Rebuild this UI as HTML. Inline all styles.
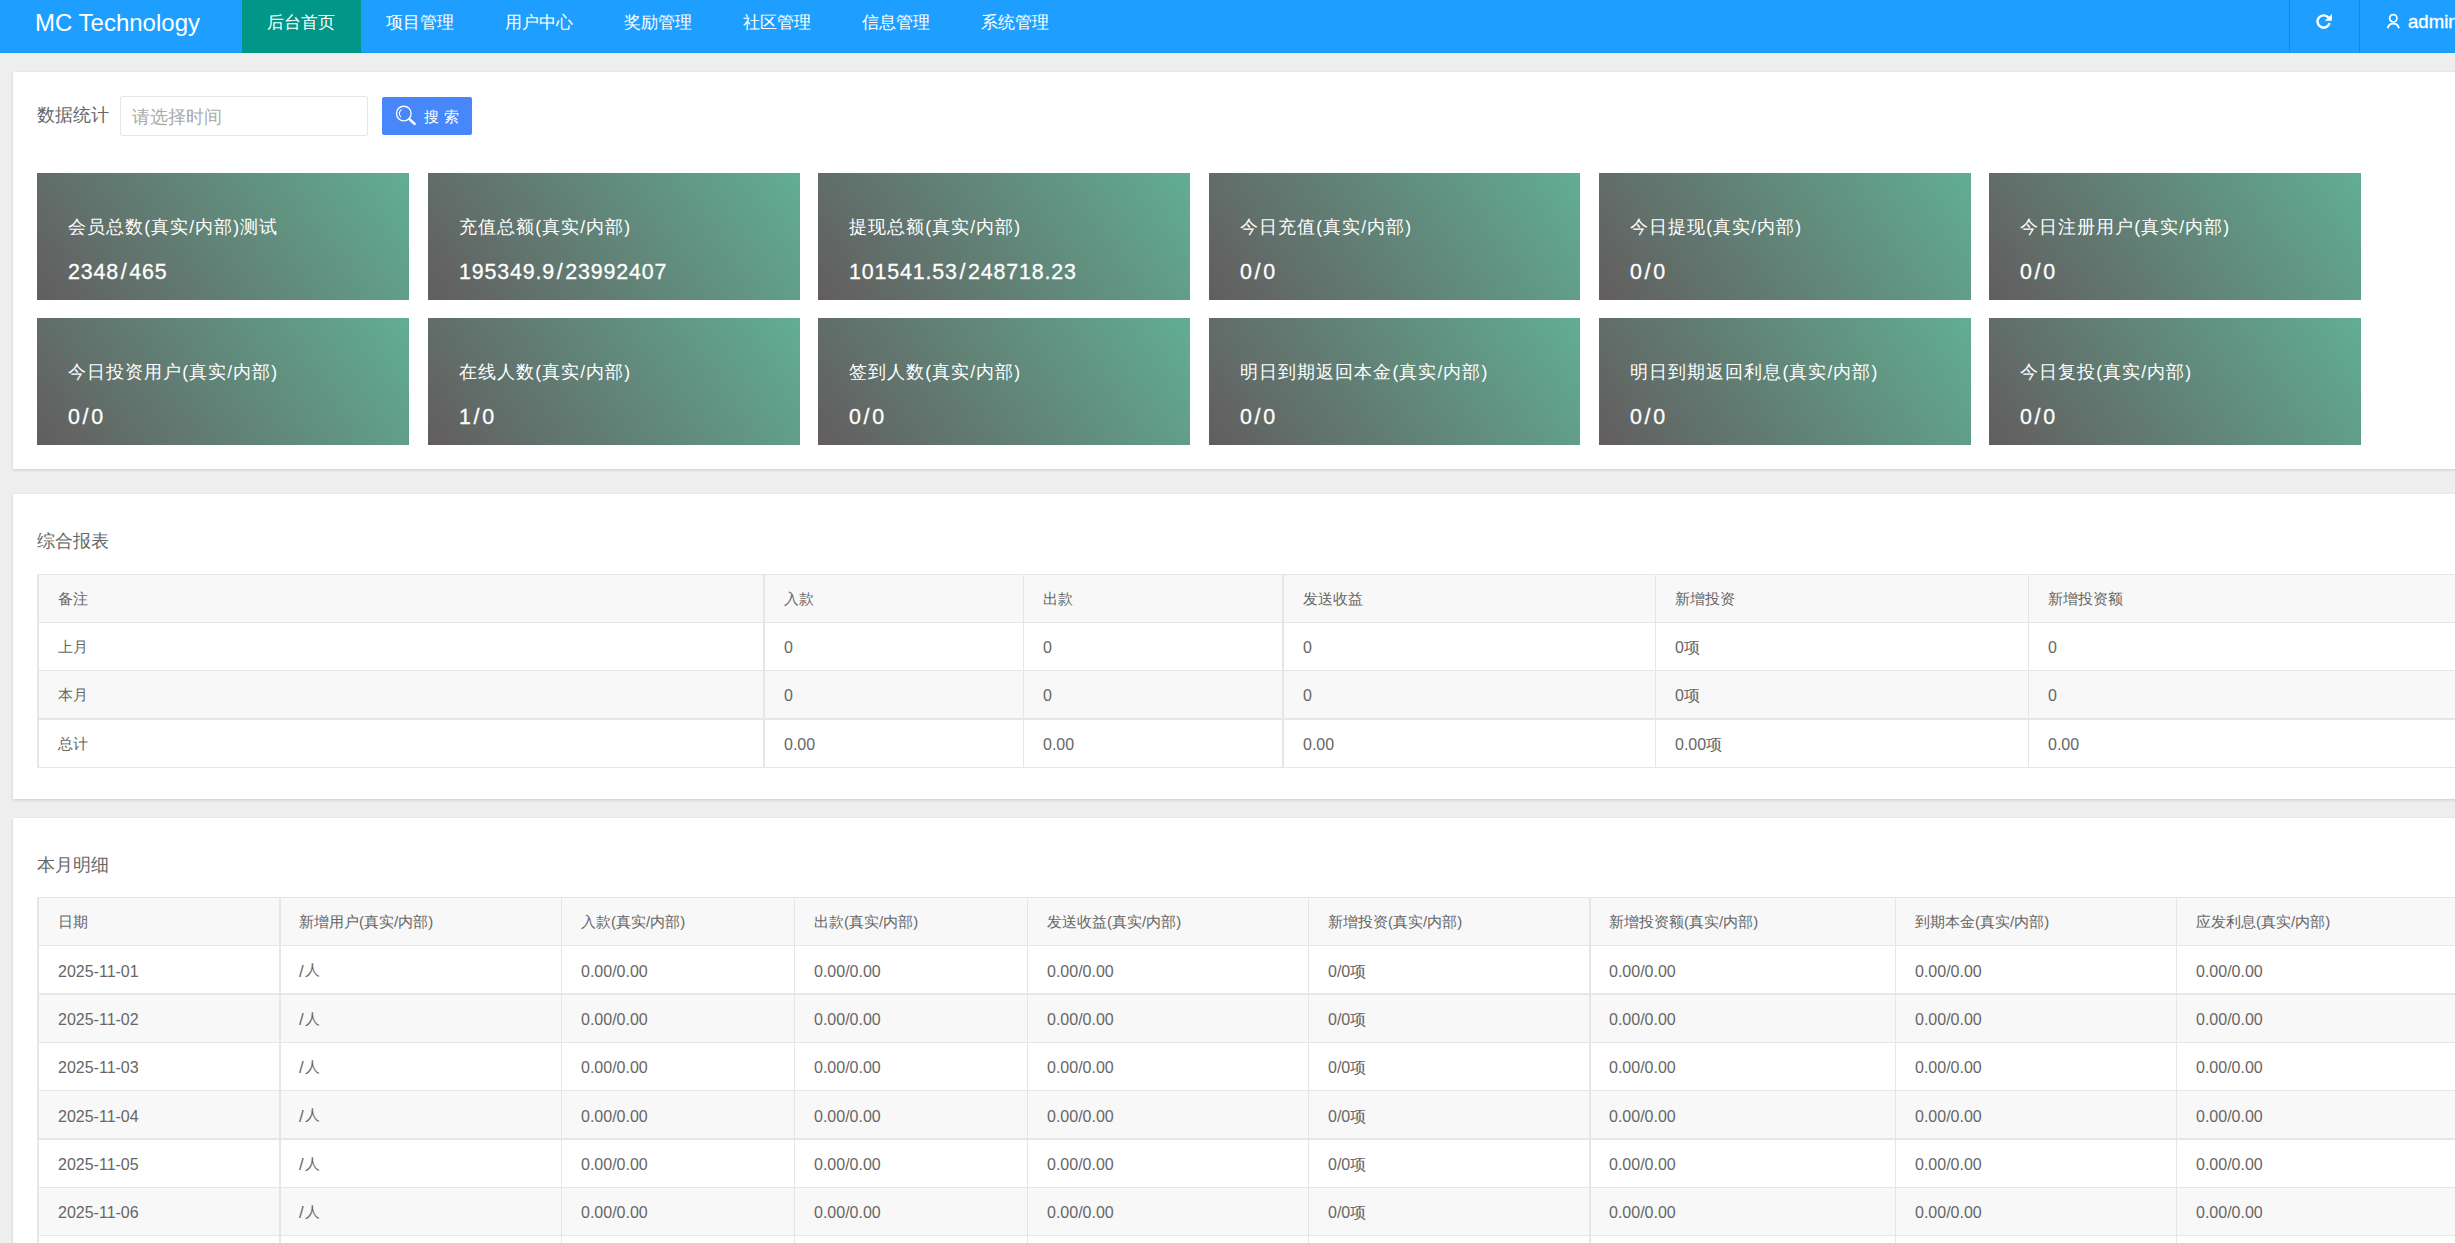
<!DOCTYPE html>
<html><head><meta charset="utf-8">
<style>
*{box-sizing:border-box;margin:0;padding:0}
html,body{width:2455px;height:1243px;overflow:hidden;background:#eeeeee;font-family:"Liberation Sans",sans-serif;color:#666}
.hd{position:absolute;left:0;top:0;width:2455px;height:53px;background:#1E9FFF;border-bottom:1px solid #129aff;color:#fff}
.hdl{position:absolute;left:0;top:53px;width:2455px;height:1px;background:#f6f2ef}
.logo{position:absolute;left:35px;top:0.5px;height:44px;line-height:44px;font-size:24px;white-space:nowrap}
.nav{position:absolute;top:0;height:52px;width:119px;line-height:44px;font-size:17.45px;text-align:center;white-space:nowrap;padding-right:1px}
.nav.on{background:#009688;height:53px;border-bottom:1px solid #00917f;box-sizing:border-box}
.sep{position:absolute;top:0;width:1px;height:52px;background:#1a86d4}
.card{position:absolute;left:13px;width:2600px;background:#fff;box-shadow:0 1px 3px rgba(0,0,0,.14)}
.lbl{position:absolute;font-size:17.5px;line-height:20px;color:#666;white-space:nowrap}
.inp{position:absolute;left:120px;top:96px;width:247.5px;height:40px;border:1px solid #e6e6e6;border-radius:2px;background:#fff}
.inp span{position:absolute;left:11px;top:1px;line-height:38px;font-size:17.5px;color:#aaa;white-space:nowrap}
.btn{position:absolute;width:90.6px;height:38.6px;background:#4787fa;border-radius:2px;color:#fff}
.btn span{position:absolute;left:42.5px;top:0.6px;line-height:39px;font-size:15px;letter-spacing:4.8px;white-space:nowrap}
.box{position:absolute;width:372px;height:127px;background:linear-gradient(55deg,#625d5e,#61ae93);color:#fff}
.box .t{position:absolute;left:31px;top:44px;font-size:17.5px;line-height:20px;white-space:nowrap;letter-spacing:1.05px}
.box .v{position:absolute;-webkit-text-stroke:.3px #fff;left:31px;top:86.8px;font-size:21.4px;line-height:24px;white-space:nowrap;letter-spacing:.84px}
.box .v i{font-style:normal;margin:0 1.8px}
.tb{position:absolute;border-top:1px solid transparent;border-left:2px solid transparent}
.row{position:absolute;left:0;height:48.2px;border-bottom:1px solid transparent;white-space:nowrap}
.cell{position:absolute;top:0;height:100%;padding-left:19px;font-size:15px;color:#666}
.hdr{background:transparent}
.ev{background:transparent}
.ln{position:absolute;background:#e6e6e6}
.bg{position:absolute;background:#f8f8f8}
.n{font-size:16px;padding-top:1.5px}
.t1 .n{padding-top:1px}
.sl{font-size:17px;margin:0 1px 0 0;position:relative;top:1.5px}
</style></head><body>
<div class="hd">
<div class="logo">MC Technology</div>
<div class="nav on" style="left:242px">后台首页</div>
<div class="nav" style="left:361px">项目管理</div>
<div class="nav" style="left:480px">用户中心</div>
<div class="nav" style="left:599px">奖励管理</div>
<div class="nav" style="left:718px">社区管理</div>
<div class="nav" style="left:837px">信息管理</div>
<div class="nav" style="left:956px">系统管理</div>
<div class="sep" style="left:2289px"></div><div class="sep" style="left:2359px"></div>
<svg style="position:absolute;left:2314px;top:12px" width="22" height="22" viewBox="0 0 22 22"><path d="M15.52 11.09A6.1 6.1 0 1 1 14.44 5.75" fill="none" stroke="#fff" stroke-width="2.4"/><path d="M17.85 2.08V8.84H10.75z" fill="#fff"/></svg>
<svg style="position:absolute;left:2385px;top:13px" width="18" height="18" viewBox="0 0 18 18"><circle cx="8.3" cy="5.2" r="3.65" fill="none" stroke="#fff" stroke-width="1.7"/><path d="M2.7 15.3A5.71 5.71 0 0 1 13.9 15.3" fill="none" stroke="#fff" stroke-width="1.8"/></svg>
<div style="position:absolute;left:2408px;top:-0.5px;line-height:44px;font-size:18.6px;white-space:nowrap;-webkit-text-stroke:.35px #fff">admin</div>
</div><div class="hdl"></div>
<div class="card" style="top:72px;height:397px">
<div class="lbl" style="left:24px;top:33px">数据统计</div>
<div class="inp" style="left:107px;top:24px"><span>请选择时间</span></div>
<div class="btn" style="left:368.6px;top:24.6px"><svg style="position:absolute;left:13.4px;top:8.4px" width="24" height="24" viewBox="0 0 24 24"><circle cx="8.8" cy="8.5" r="7.3" fill="none" stroke="#fff" stroke-width="1.35"/><path d="M6.6 4.6A4.5 4.5 0 0 0 6.0 12.0" fill="none" stroke="#fff" stroke-width="1.1"/><path d="M14.4 14.1L19.6 18.9" stroke="#fff" stroke-width="2.6" stroke-linecap="round"/></svg><span>搜索</span></div>
<div class="box" style="left:24px;top:101.0px;width:372px"><div class="t">会员总数(真实/内部)测试</div><div class="v">2348<i>/</i>465</div></div>
<div class="box" style="left:415px;top:101.0px;width:372px"><div class="t">充值总额(真实/内部)</div><div class="v">195349.9<i>/</i>23992407</div></div>
<div class="box" style="left:805px;top:101.0px;width:372px"><div class="t">提现总额(真实/内部)</div><div class="v">101541.53<i>/</i>248718.23</div></div>
<div class="box" style="left:1196px;top:101.0px;width:371px"><div class="t">今日充值(真实/内部)</div><div class="v">0<i>/</i>0</div></div>
<div class="box" style="left:1586px;top:101.0px;width:372px"><div class="t">今日提现(真实/内部)</div><div class="v">0<i>/</i>0</div></div>
<div class="box" style="left:1976px;top:101.0px;width:372px"><div class="t">今日注册用户(真实/内部)</div><div class="v">0<i>/</i>0</div></div>
<div class="box" style="left:24px;top:246.0px;width:372px"><div class="t">今日投资用户(真实/内部)</div><div class="v">0<i>/</i>0</div></div>
<div class="box" style="left:415px;top:246.0px;width:372px"><div class="t">在线人数(真实/内部)</div><div class="v">1<i>/</i>0</div></div>
<div class="box" style="left:805px;top:246.0px;width:372px"><div class="t">签到人数(真实/内部)</div><div class="v">0<i>/</i>0</div></div>
<div class="box" style="left:1196px;top:246.0px;width:371px"><div class="t">明日到期返回本金(真实/内部)</div><div class="v">0<i>/</i>0</div></div>
<div class="box" style="left:1586px;top:246.0px;width:372px"><div class="t">明日到期返回利息(真实/内部)</div><div class="v">0<i>/</i>0</div></div>
<div class="box" style="left:1976px;top:246.0px;width:372px"><div class="t">今日复投(真实/内部)</div><div class="v">0<i>/</i>0</div></div>
</div>
<div class="card" style="top:494px;height:305px">
<div class="lbl" style="left:24px;top:37px">综合报表</div>
</div>
<div class="bg" style="left:37px;top:575px;width:2563px;height:47px"></div><div class="bg" style="left:37px;top:671px;width:2563px;height:47px"></div><div class="ln" style="left:37px;top:574px;width:2563px;height:1px"></div><div class="ln" style="left:37px;top:622px;width:2563px;height:1px"></div><div class="ln" style="left:37px;top:670px;width:2563px;height:1px"></div><div class="ln" style="left:37px;top:718px;width:2563px;height:2px"></div><div class="ln" style="left:37px;top:767px;width:2563px;height:1px"></div><div class="ln" style="left:37px;top:574px;width:2px;height:194px"></div><div class="ln" style="left:763px;top:574px;width:2px;height:194px"></div><div class="ln" style="left:1023px;top:574px;width:1px;height:194px"></div><div class="ln" style="left:1282px;top:574px;width:2px;height:194px"></div><div class="ln" style="left:1655px;top:574px;width:1px;height:194px"></div><div class="ln" style="left:2028px;top:574px;width:1px;height:194px"></div>
<div class="tb t1" style="left:37px;top:574.0px;width:2563px;height:193.8px">
<div class="row hdr" style="top:0.0px;width:2563px"><div class="cell" style="left:0.0px;width:726.0px;line-height:48.2px">备注</div><div class="cell" style="left:726.0px;width:259.0px;line-height:48.2px">入款</div><div class="cell" style="left:985.0px;width:260.0px;line-height:48.2px">出款</div><div class="cell" style="left:1245.0px;width:372.0px;line-height:48.2px">发送收益</div><div class="cell" style="left:1617.0px;width:373.0px;line-height:48.2px">新增投资</div><div class="cell" style="left:1990.0px;width:572.0px;line-height:48.2px">新增投资额</div></div>
<div class="row" style="top:48.2px;width:2563px"><div class="cell" style="left:0.0px;width:726.0px;line-height:48.2px">上月</div><div class="cell n" style="left:726.0px;width:259.0px;line-height:48.2px">0</div><div class="cell n" style="left:985.0px;width:260.0px;line-height:48.2px">0</div><div class="cell n" style="left:1245.0px;width:372.0px;line-height:48.2px">0</div><div class="cell n" style="left:1617.0px;width:373.0px;line-height:48.2px">0项</div><div class="cell n" style="left:1990.0px;width:572.0px;line-height:48.2px">0</div></div>
<div class="row ev" style="top:96.4px;width:2563px"><div class="cell" style="left:0.0px;width:726.0px;line-height:48.2px">本月</div><div class="cell n" style="left:726.0px;width:259.0px;line-height:48.2px">0</div><div class="cell n" style="left:985.0px;width:260.0px;line-height:48.2px">0</div><div class="cell n" style="left:1245.0px;width:372.0px;line-height:48.2px">0</div><div class="cell n" style="left:1617.0px;width:373.0px;line-height:48.2px">0项</div><div class="cell n" style="left:1990.0px;width:572.0px;line-height:48.2px">0</div></div>
<div class="row" style="top:144.6px;width:2563px"><div class="cell" style="left:0.0px;width:726.0px;line-height:48.2px">总计</div><div class="cell n" style="left:726.0px;width:259.0px;line-height:48.2px">0.00</div><div class="cell n" style="left:985.0px;width:260.0px;line-height:48.2px">0.00</div><div class="cell n" style="left:1245.0px;width:372.0px;line-height:48.2px">0.00</div><div class="cell n" style="left:1617.0px;width:373.0px;line-height:48.2px">0.00项</div><div class="cell n" style="left:1990.0px;width:572.0px;line-height:48.2px">0.00</div></div>
</div>
<div class="card" style="top:818px;height:600px">
<div class="lbl" style="left:24px;top:37px">本月明细</div>
</div>
<div class="bg" style="left:37px;top:898px;width:2663px;height:47px"></div><div class="bg" style="left:37px;top:995px;width:2663px;height:47px"></div><div class="bg" style="left:37px;top:1091px;width:2663px;height:47px"></div><div class="bg" style="left:37px;top:1188px;width:2663px;height:47px"></div><div class="ln" style="left:37px;top:897px;width:2663px;height:1px"></div><div class="ln" style="left:37px;top:945px;width:2663px;height:1px"></div><div class="ln" style="left:37px;top:993px;width:2663px;height:2px"></div><div class="ln" style="left:37px;top:1042px;width:2663px;height:1px"></div><div class="ln" style="left:37px;top:1090px;width:2663px;height:1px"></div><div class="ln" style="left:37px;top:1138px;width:2663px;height:2px"></div><div class="ln" style="left:37px;top:1187px;width:2663px;height:1px"></div><div class="ln" style="left:37px;top:1235px;width:2663px;height:1px"></div><div class="ln" style="left:37px;top:897px;width:2px;height:346px"></div><div class="ln" style="left:279px;top:897px;width:2px;height:346px"></div><div class="ln" style="left:561px;top:897px;width:1px;height:346px"></div><div class="ln" style="left:794px;top:897px;width:1px;height:346px"></div><div class="ln" style="left:1027px;top:897px;width:1px;height:346px"></div><div class="ln" style="left:1308px;top:897px;width:1px;height:346px"></div><div class="ln" style="left:1589px;top:897px;width:2px;height:346px"></div><div class="ln" style="left:1895px;top:897px;width:1px;height:346px"></div><div class="ln" style="left:2176px;top:897px;width:1px;height:346px"></div>
<div class="tb" style="left:37px;top:897.0px;width:2663px;height:435.7px">
<div class="row hdr" style="top:0.0px;width:2663px"><div class="cell" style="left:0.0px;width:241.0px;line-height:48.3px">日期</div><div class="cell" style="left:241.0px;width:282.0px;line-height:48.3px">新增用户(真实/内部)</div><div class="cell" style="left:523.0px;width:233.0px;line-height:48.3px">入款(真实/内部)</div><div class="cell" style="left:756.0px;width:233.0px;line-height:48.3px">出款(真实/内部)</div><div class="cell" style="left:989.0px;width:281.0px;line-height:48.3px">发送收益(真实/内部)</div><div class="cell" style="left:1270.0px;width:281.0px;line-height:48.3px">新增投资(真实/内部)</div><div class="cell" style="left:1551.0px;width:306.0px;line-height:48.3px">新增投资额(真实/内部)</div><div class="cell" style="left:1857.0px;width:281.0px;line-height:48.3px">到期本金(真实/内部)</div><div class="cell" style="left:2138.0px;width:281.0px;line-height:48.3px">应发利息(真实/内部)</div><div class="cell" style="left:2419.0px;width:243.0px;line-height:48.3px"></div></div>
<div class="row" style="top:48.3px;width:2663px"><div class="cell n" style="left:0.0px;width:241.0px;line-height:48.3px">2025-11-01</div><div class="cell" style="left:241.0px;width:282.0px;line-height:48.3px"><span class="sl">/</span>人</div><div class="cell n" style="left:523.0px;width:233.0px;line-height:48.3px">0.00/0.00</div><div class="cell n" style="left:756.0px;width:233.0px;line-height:48.3px">0.00/0.00</div><div class="cell n" style="left:989.0px;width:281.0px;line-height:48.3px">0.00/0.00</div><div class="cell n" style="left:1270.0px;width:281.0px;line-height:48.3px">0/0项</div><div class="cell n" style="left:1551.0px;width:306.0px;line-height:48.3px">0.00/0.00</div><div class="cell n" style="left:1857.0px;width:281.0px;line-height:48.3px">0.00/0.00</div><div class="cell n" style="left:2138.0px;width:281.0px;line-height:48.3px">0.00/0.00</div><div class="cell" style="left:2419.0px;width:243.0px;line-height:48.3px"></div></div>
<div class="row ev" style="top:96.6px;width:2663px"><div class="cell n" style="left:0.0px;width:241.0px;line-height:48.3px">2025-11-02</div><div class="cell" style="left:241.0px;width:282.0px;line-height:48.3px"><span class="sl">/</span>人</div><div class="cell n" style="left:523.0px;width:233.0px;line-height:48.3px">0.00/0.00</div><div class="cell n" style="left:756.0px;width:233.0px;line-height:48.3px">0.00/0.00</div><div class="cell n" style="left:989.0px;width:281.0px;line-height:48.3px">0.00/0.00</div><div class="cell n" style="left:1270.0px;width:281.0px;line-height:48.3px">0/0项</div><div class="cell n" style="left:1551.0px;width:306.0px;line-height:48.3px">0.00/0.00</div><div class="cell n" style="left:1857.0px;width:281.0px;line-height:48.3px">0.00/0.00</div><div class="cell n" style="left:2138.0px;width:281.0px;line-height:48.3px">0.00/0.00</div><div class="cell" style="left:2419.0px;width:243.0px;line-height:48.3px"></div></div>
<div class="row" style="top:144.9px;width:2663px"><div class="cell n" style="left:0.0px;width:241.0px;line-height:48.3px">2025-11-03</div><div class="cell" style="left:241.0px;width:282.0px;line-height:48.3px"><span class="sl">/</span>人</div><div class="cell n" style="left:523.0px;width:233.0px;line-height:48.3px">0.00/0.00</div><div class="cell n" style="left:756.0px;width:233.0px;line-height:48.3px">0.00/0.00</div><div class="cell n" style="left:989.0px;width:281.0px;line-height:48.3px">0.00/0.00</div><div class="cell n" style="left:1270.0px;width:281.0px;line-height:48.3px">0/0项</div><div class="cell n" style="left:1551.0px;width:306.0px;line-height:48.3px">0.00/0.00</div><div class="cell n" style="left:1857.0px;width:281.0px;line-height:48.3px">0.00/0.00</div><div class="cell n" style="left:2138.0px;width:281.0px;line-height:48.3px">0.00/0.00</div><div class="cell" style="left:2419.0px;width:243.0px;line-height:48.3px"></div></div>
<div class="row ev" style="top:193.2px;width:2663px"><div class="cell n" style="left:0.0px;width:241.0px;line-height:48.3px">2025-11-04</div><div class="cell" style="left:241.0px;width:282.0px;line-height:48.3px"><span class="sl">/</span>人</div><div class="cell n" style="left:523.0px;width:233.0px;line-height:48.3px">0.00/0.00</div><div class="cell n" style="left:756.0px;width:233.0px;line-height:48.3px">0.00/0.00</div><div class="cell n" style="left:989.0px;width:281.0px;line-height:48.3px">0.00/0.00</div><div class="cell n" style="left:1270.0px;width:281.0px;line-height:48.3px">0/0项</div><div class="cell n" style="left:1551.0px;width:306.0px;line-height:48.3px">0.00/0.00</div><div class="cell n" style="left:1857.0px;width:281.0px;line-height:48.3px">0.00/0.00</div><div class="cell n" style="left:2138.0px;width:281.0px;line-height:48.3px">0.00/0.00</div><div class="cell" style="left:2419.0px;width:243.0px;line-height:48.3px"></div></div>
<div class="row" style="top:241.5px;width:2663px"><div class="cell n" style="left:0.0px;width:241.0px;line-height:48.3px">2025-11-05</div><div class="cell" style="left:241.0px;width:282.0px;line-height:48.3px"><span class="sl">/</span>人</div><div class="cell n" style="left:523.0px;width:233.0px;line-height:48.3px">0.00/0.00</div><div class="cell n" style="left:756.0px;width:233.0px;line-height:48.3px">0.00/0.00</div><div class="cell n" style="left:989.0px;width:281.0px;line-height:48.3px">0.00/0.00</div><div class="cell n" style="left:1270.0px;width:281.0px;line-height:48.3px">0/0项</div><div class="cell n" style="left:1551.0px;width:306.0px;line-height:48.3px">0.00/0.00</div><div class="cell n" style="left:1857.0px;width:281.0px;line-height:48.3px">0.00/0.00</div><div class="cell n" style="left:2138.0px;width:281.0px;line-height:48.3px">0.00/0.00</div><div class="cell" style="left:2419.0px;width:243.0px;line-height:48.3px"></div></div>
<div class="row ev" style="top:289.8px;width:2663px"><div class="cell n" style="left:0.0px;width:241.0px;line-height:48.3px">2025-11-06</div><div class="cell" style="left:241.0px;width:282.0px;line-height:48.3px"><span class="sl">/</span>人</div><div class="cell n" style="left:523.0px;width:233.0px;line-height:48.3px">0.00/0.00</div><div class="cell n" style="left:756.0px;width:233.0px;line-height:48.3px">0.00/0.00</div><div class="cell n" style="left:989.0px;width:281.0px;line-height:48.3px">0.00/0.00</div><div class="cell n" style="left:1270.0px;width:281.0px;line-height:48.3px">0/0项</div><div class="cell n" style="left:1551.0px;width:306.0px;line-height:48.3px">0.00/0.00</div><div class="cell n" style="left:1857.0px;width:281.0px;line-height:48.3px">0.00/0.00</div><div class="cell n" style="left:2138.0px;width:281.0px;line-height:48.3px">0.00/0.00</div><div class="cell" style="left:2419.0px;width:243.0px;line-height:48.3px"></div></div>
<div class="row" style="top:338.1px;width:2663px"><div class="cell n" style="left:0.0px;width:241.0px;line-height:48.3px">2025-11-07</div><div class="cell" style="left:241.0px;width:282.0px;line-height:48.3px"><span class="sl">/</span>人</div><div class="cell n" style="left:523.0px;width:233.0px;line-height:48.3px">0.00/0.00</div><div class="cell n" style="left:756.0px;width:233.0px;line-height:48.3px">0.00/0.00</div><div class="cell n" style="left:989.0px;width:281.0px;line-height:48.3px">0.00/0.00</div><div class="cell n" style="left:1270.0px;width:281.0px;line-height:48.3px">0/0项</div><div class="cell n" style="left:1551.0px;width:306.0px;line-height:48.3px">0.00/0.00</div><div class="cell n" style="left:1857.0px;width:281.0px;line-height:48.3px">0.00/0.00</div><div class="cell n" style="left:2138.0px;width:281.0px;line-height:48.3px">0.00/0.00</div><div class="cell" style="left:2419.0px;width:243.0px;line-height:48.3px"></div></div>
<div class="row ev" style="top:386.4px;width:2663px"><div class="cell n" style="left:0.0px;width:241.0px;line-height:48.3px">2025-11-08</div><div class="cell" style="left:241.0px;width:282.0px;line-height:48.3px"><span class="sl">/</span>人</div><div class="cell n" style="left:523.0px;width:233.0px;line-height:48.3px">0.00/0.00</div><div class="cell n" style="left:756.0px;width:233.0px;line-height:48.3px">0.00/0.00</div><div class="cell n" style="left:989.0px;width:281.0px;line-height:48.3px">0.00/0.00</div><div class="cell n" style="left:1270.0px;width:281.0px;line-height:48.3px">0/0项</div><div class="cell n" style="left:1551.0px;width:306.0px;line-height:48.3px">0.00/0.00</div><div class="cell n" style="left:1857.0px;width:281.0px;line-height:48.3px">0.00/0.00</div><div class="cell n" style="left:2138.0px;width:281.0px;line-height:48.3px">0.00/0.00</div><div class="cell" style="left:2419.0px;width:243.0px;line-height:48.3px"></div></div>
</div>
</body></html>
